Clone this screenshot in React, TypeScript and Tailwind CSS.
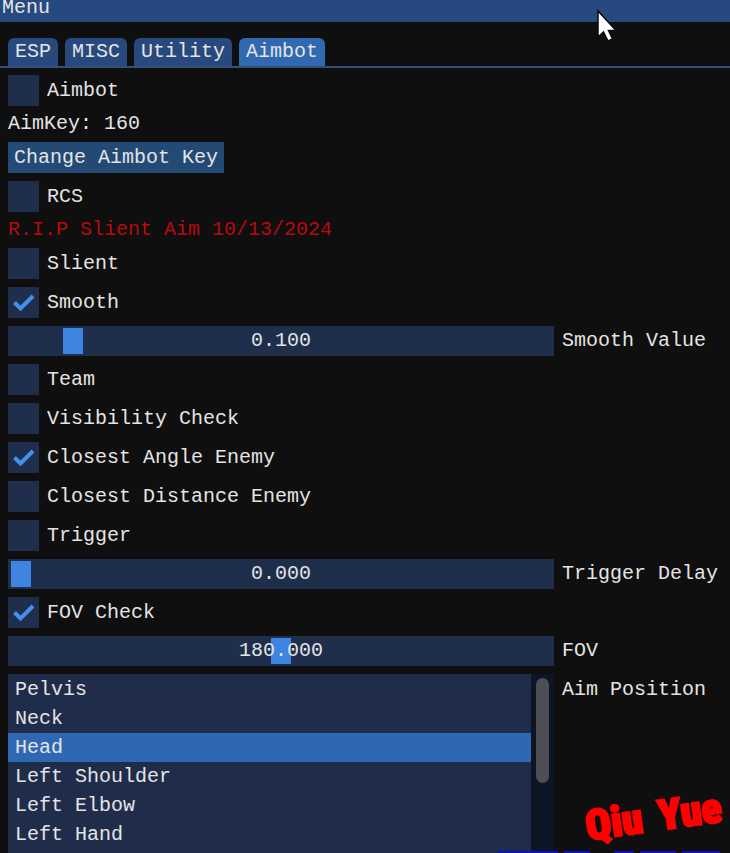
import { useState } from "react";

const tabs = ["ESP", "MISC", "Utility", "Aimbot"];
const bones = [
  "Pelvis",
  "Neck",
  "Head",
  "Left Shoulder",
  "Left Elbow",
  "Left Hand",
  "Right Shoulder",
];

interface CheckProps {
  label: string;
  defaultChecked?: boolean;
}
const Check = ({ label, defaultChecked = false }: CheckProps) => {
  return (
    <label className="flex items-center gap-2 self-start">
      <span className="grid">
        <input
          type="checkbox"
          defaultChecked={defaultChecked}
          className="peer col-start-1 row-start-1 size-[31px] appearance-none bg-[#1f2f4b]"
        />
        <svg
          viewBox="0 0 31 31"
          className="pointer-events-none invisible col-start-1 row-start-1 size-[31px] peer-checked:visible"
        >
          <path
            d="M6.5 15.5 L12.5 21.5 L25 9"
            fill="none"
            stroke="#4290f0"
            strokeWidth="4"
          />
        </svg>
      </span>
      {label}
    </label>
  );
};

interface SliderProps {
  label: string;
  max: number;
  initial: number;
}
const Slider = ({ label, max, initial }: SliderProps) => {
  const [value, setValue] = useState(initial);
  return (
    <label className="flex items-center gap-2">
      <span className="grid min-w-0 flex-1">
        <input
          type="range"
          min={0}
          max={max}
          step={0.001}
          value={value}
          onChange={(e) => setValue(Number(e.target.value))}
          className="col-start-1 row-start-1 h-[30px] w-full appearance-none bg-[#1f2e4b] px-[3px] [&::-webkit-slider-thumb]:h-[26px] [&::-webkit-slider-thumb]:w-[20px] [&::-webkit-slider-thumb]:appearance-none [&::-webkit-slider-thumb]:bg-[#3d85e0]"
        />
        <span className="pointer-events-none z-10 col-start-1 row-start-1 self-center text-center">
          {value.toFixed(3)}
        </span>
      </span>
      <span className="w-[160px] whitespace-nowrap">{label}</span>
    </label>
  );
};

const App = () => {
  const [tab, setTab] = useState("Aimbot");
  const [bone, setBone] = useState("Head");
  return (
    <div className="relative flex h-screen flex-col overflow-hidden bg-[#0f0f0f] font-['Liberation_Mono',monospace] text-[20px] leading-[20px] text-[#e4e4e4]">
      <header className="h-[22px] bg-[#264a7f] px-0.5">
        <h1 className="leading-[16px]">Menu</h1>
      </header>
      <nav
        role="tablist"
        className="mt-4 flex gap-[7px] border-b-2 border-[#33507c] px-2"
      >
        {tabs.map((t) => (
          <button
            key={t}
            role="tab"
            aria-selected={tab === t}
            onClick={() => setTab(t)}
            className={
              tab === t
                ? "h-[28px] rounded-t-md bg-[#3069b0] px-[7px]"
                : "h-[28px] rounded-t-md bg-[#28497e] px-[7px]"
            }
          >
            {t}
          </button>
        ))}
      </nav>
      <main className="flex min-h-0 flex-1 flex-col gap-2 px-2 pt-[7px]">
        <Check label="Aimbot" />
        <p>AimKey: 160</p>
        <button className="h-[31px] self-start bg-[#234a74] px-1.5">
          Change Aimbot Key
        </button>
        <Check label="RCS" />
        <p className="text-[#b8090f]">R.I.P Slient Aim 10/13/2024</p>
        <Check label="Slient" />
        <Check label="Smooth" defaultChecked />
        <Slider label="Smooth Value" max={1} initial={0.1} />
        <Check label="Team" />
        <Check label="Visibility Check" />
        <Check label="Closest Angle Enemy" defaultChecked />
        <Check label="Closest Distance Enemy" />
        <Check label="Trigger" />
        <Slider label="Trigger Delay" max={1} initial={0} />
        <Check label="FOV Check" defaultChecked />
        <Slider label="FOV" max={360} initial={180} />
        <div className="flex min-h-0 flex-1 gap-2">
          <div className="flex min-w-0 flex-1 overflow-hidden bg-[#0b1524]">
            <div
              role="listbox"
              aria-labelledby="aim-position"
              className="flex flex-1 flex-col bg-[#202d4a] pt-px"
            >
              {bones.map((b) => (
                <button
                  key={b}
                  role="option"
                  aria-selected={bone === b}
                  onClick={() => setBone(b)}
                  className={
                    bone === b
                      ? "h-[29px] shrink-0 bg-[#2f68b2] px-[7px] text-left"
                      : "h-[29px] shrink-0 px-[7px] text-left"
                  }
                >
                  {b}
                </button>
              ))}
            </div>
            <div className="w-[23px] px-[5px] pt-1">
              <div className="h-[105px] rounded-full bg-[#4e4f54]" />
            </div>
          </div>
          <span id="aim-position" className="w-[160px] pt-1.5">
            Aim Position
          </span>
        </div>
      </main>
      <svg
        viewBox="0 0 22 34"
        className="pointer-events-none absolute top-[9px] left-[596px] h-[34px] w-[22px]"
      >
        <path
          d="M2 2 V28 L7.5 23 L12 32 L16.5 30 L12.5 21.5 H20 Z"
          fill="#fff"
          stroke="#0a0a0a"
          strokeWidth="1.5"
        />
      </svg>
      {/* top edge of the blue banner running off the bottom */}
      <svg
        viewBox="0 0 222 2"
        className="pointer-events-none absolute right-[10px] bottom-0 h-[2px] w-[222px]"
      >
        <path
          d="M0 1 H60 M66 1 H92 M116 1 H136 M142 1 H178 M184 1 H222"
          stroke="#1010c0"
          strokeWidth="2"
        />
      </svg>
      <div className="pointer-events-none absolute right-2 bottom-3 flex -rotate-8 gap-4 font-['Roboto_Condensed','Roboto',sans-serif] text-[42px] leading-[48px] font-black text-[#ff0000] [-webkit-text-stroke:2px_#ff0000]">
        <span>Qiu</span>
        <span>Yue</span>
      </div>
    </div>
  );
};
export default App;
